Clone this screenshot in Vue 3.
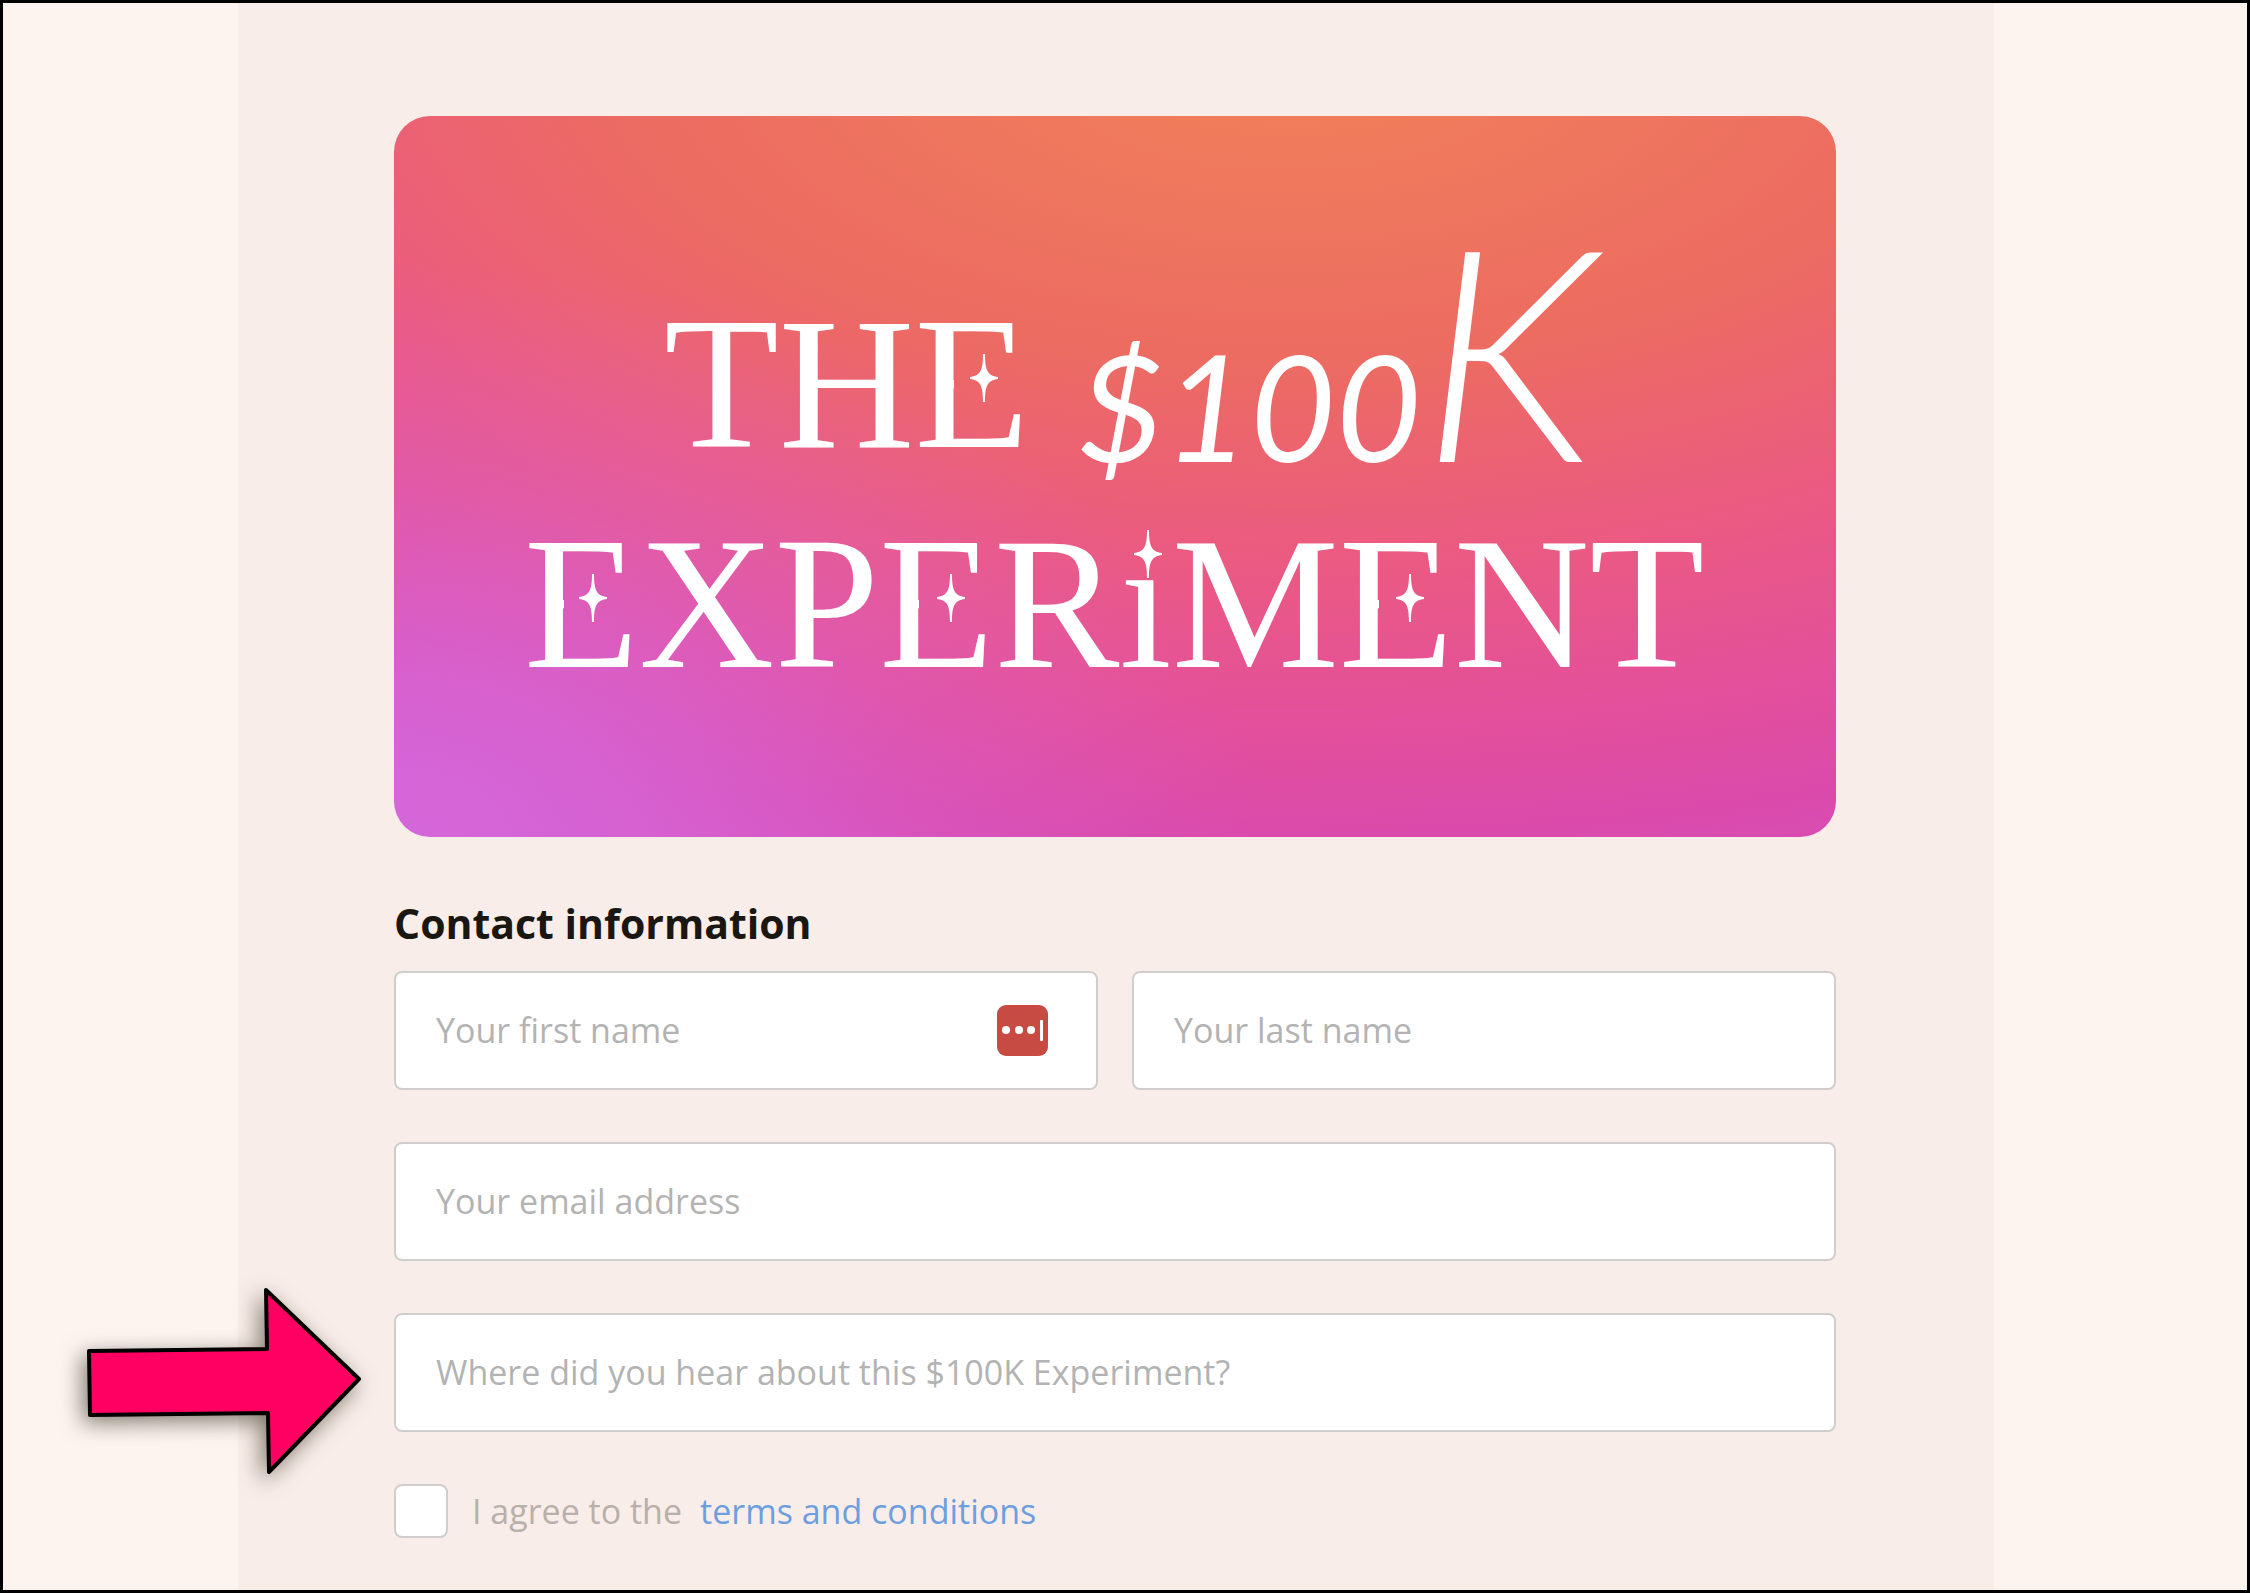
<script setup>
    import { ref } from "vue";

    const form = ref({
        first_name: "",
        last_name: "",
        email: "",
        source: "",
        agreed: false,
    });

    const bars = ref([
        { x: 560, y: 246, width: 51, height: 42 },
        { x: 170, y: 466, width: 51, height: 42 },
        { x: 525, y: 466, width: 51, height: 42 },
        { x: 985, y: 466, width: 51, height: 42 },
        { x: 736, y: 405, width: 36, height: 50 },
    ]);

    const stars = ref([
        { x: 590, y: 262 },
        { x: 199, y: 482 },
        { x: 557, y: 482 },
        { x: 754, y: 438 },
        { x: 1016, y: 482 },
    ]);
</script>
<template>
    <main class="page">
        <form class="column" @submit.prevent>
            <svg class="banner" viewBox="0 0 1442 721" role="img" aria-label="The $100K Experiment">
                <defs>
                    <!-- opens up the inside of each E and the dot of the i -->
                    <mask id="cut" maskUnits="userSpaceOnUse" x="0" y="0" width="1442" height="721">
                        <rect width="1442" height="721" fill="#fff" />
                        <rect
                            v-for="(bar, i) in bars"
                            :key="i"
                            :x="bar.x"
                            :y="bar.y"
                            :width="bar.width"
                            :height="bar.height"
                            fill="#000"
                        />
                    </mask>
                </defs>
                <g mask="url(#cut)">
                    <text class="serif" x="270" y="331">THE</text>
                    <text class="serif" x="130" y="551">EXPERiMENT</text>
                </g>
                <text class="script" x="684" y="346">$100<tspan class="big">K</tspan></text>
                <path
                    v-for="star in stars"
                    :key="star.x"
                    :transform="`translate(${star.x} ${star.y})`"
                    d="M-1-24H1C1-9 3-2 14-1V1C3 2 1 9 1 24H-1C-1 9-3 2-14 1V-1C-3-2-1-9-1-24Z"
                />
            </svg>

            <h2>Contact information</h2>
            <div class="names">
                <div class="field">
                    <input v-model="form.first_name" type="text" placeholder="Your first name" aria-label="Your first name" />
                    <button class="autofill" type="button" aria-label="Fill in from password manager">
                        <svg viewBox="0 0 51 51">
                            <circle cx="9" cy="25" r="4" />
                            <circle cx="22" cy="25" r="4" />
                            <circle cx="34" cy="25" r="4" />
                            <rect x="43" y="15" width="3" height="21" rx="1" />
                        </svg>
                    </button>
                </div>
                <div class="field">
                    <input v-model="form.last_name" type="text" placeholder="Your last name" aria-label="Your last name" />
                </div>
            </div>
            <div class="field">
                <input v-model="form.email" type="email" placeholder="Your email address" aria-label="Your email address" />
            </div>
            <div class="field">
                <input
                    v-model="form.source"
                    type="text"
                    placeholder="Where did you hear about this $100K Experiment?"
                    aria-label="Where did you hear about this $100K Experiment?"
                />
                <svg class="arrow" viewBox="0 0 300 200" aria-hidden="true">
                    <path d="M19 71 197 69 196 10 289 99 199 192 198 133 20 135Z" />
                </svg>
            </div>
            <div class="terms">
                <input id="agree" v-model="form.agreed" type="checkbox" />
                <label for="agree">I agree to the</label>
                <a href="#terms">terms and conditions</a>
            </div>
        </form>
    </main>
</template>

<style>
body {
    margin: 0;
}
</style>

<style scoped>
.page {
    box-sizing: border-box;
    min-height: 100vh;
    padding-right: 18px;
    border: 3px solid #000;
    background-color: #fdf4f0;
    font-family: "Open Sans", "Noto Sans", sans-serif;
    display: flex;
    justify-content: center;
}
.column {
    box-sizing: border-box;
    width: 100%;
    max-width: 1756px;
    padding: 113px 158px 48px 156px;
    background-color: #f8ede8;
}
.banner {
    display: block;
    width: 100%;
    border-radius: 36px;
    fill: #fff;
    background:
        radial-gradient(ellipse 60% 80% at 0% 100%, #d567da 0%, #d567dac0 28%, #d567da50 60%, #d567da00 100%),
        radial-gradient(ellipse 130% 125% at 62% -10%, #f07d5b 8%, #ec6b62 36%, #eb5b80 56%, #e45099 74%, #da4aab 88%, #d650bb 98%);
}
.serif {
    font-family: "Liberation Serif", serif;
    font-size: 188px;
}
.script {
    font-family: Lato, sans-serif;
    font-size: 148px;
    font-style: italic;
}
.script .big {
    font-size: 296px;
    font-weight: 300;
}
h2 {
    margin: 60px 0 22px;
    font-size: 41px;
    line-height: 52px;
    font-weight: 700;
    color: #1a1712;
}
.names {
    display: grid;
    grid-template-columns: 1fr 1fr;
    gap: 34px;
}
.field {
    position: relative;
    margin-bottom: 52px;
}
.field input {
    display: block;
    box-sizing: border-box;
    width: 100%;
    height: 119px;
    padding: 0 40px 2px;
    border: 2px solid #d0cecd;
    border-radius: 8px;
    background-color: #fff;
    font-family: inherit;
    font-size: 34px;
    color: #1a1712;
}
.field input::placeholder {
    color: #b3b3b3;
    opacity: 1;
}
.autofill {
    position: absolute;
    top: 34px;
    right: 50px;
    width: 51px;
    height: 51px;
    padding: 0;
    border: 0;
    border-radius: 9px;
    background-color: #c74b42;
}
.autofill svg {
    display: block;
    fill: #fff;
}
.arrow {
    position: absolute;
    top: -33px;
    left: -324px;
    width: 300px;
    height: 200px;
    overflow: visible;
    fill: #ff0062;
    stroke: #000;
    stroke-width: 4px;
    stroke-linejoin: round;
    filter: drop-shadow(-5px 6px 11px rgba(50, 45, 30, 0.6));
}
.terms {
    display: flex;
    align-items: center;
    font-size: 34px;
    line-height: 52px;
    color: #b8b0ab;
}
.terms input {
    appearance: none;
    box-sizing: border-box;
    width: 54px;
    height: 54px;
    margin: 0 24px 0 0;
    border: 2px solid #d0cecd;
    border-radius: 8px;
    background-color: #fff;
}
.terms input:checked {
    background-color: #6d9ee0;
}
.terms a {
    margin-left: 18px;
    color: #6d9ee0;
    text-decoration: none;
}
</style>
